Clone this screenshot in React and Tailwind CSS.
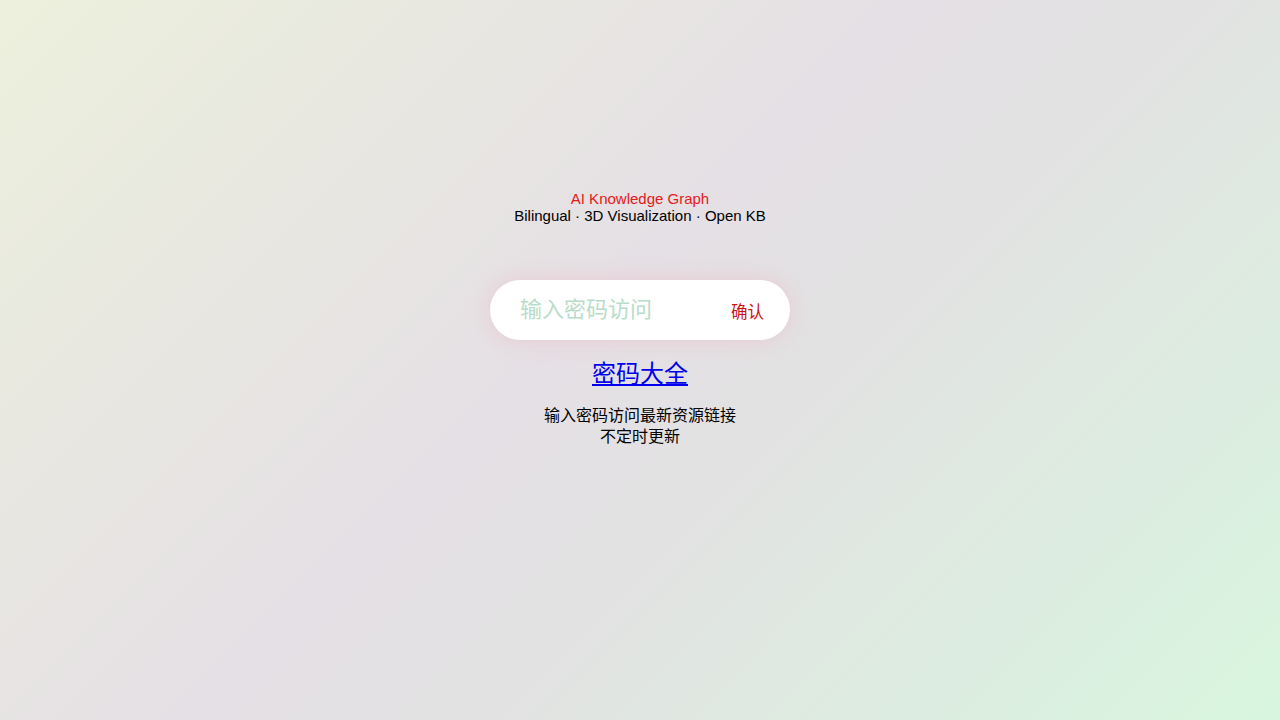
export default function App() {
  return (
    <div
      className="w-full h-[720px] overflow-hidden bg-[linear-gradient(135deg,#ecf0dc_0%,#e5e0e5_45%,#e2e2e2_60%,#d8f6df_100%)]"
      style={{ fontFamily: '"Liberation Sans", "Noto Sans CJK SC", sans-serif' }}
    >
      <div className="flex flex-col items-center pt-[190px]">
        <div className="text-center text-[15px] leading-[17px]">
          <div className="text-[#e31b1b]">AI Knowledge Graph</div>
          <div className="text-black">Bilingual · 3D Visualization · Open KB</div>
        </div>
        <div className="mt-[56px] w-[300px] h-[60px] rounded-full bg-white flex items-center pl-[30px] pr-[26px] shadow-[0_0_22px_rgba(240,170,185,0.4)]">
          <input
            type="password"
            placeholder="输入密码访问"
            className="flex-1 min-w-0 bg-transparent outline-none text-[22px] mb-[5px] placeholder:text-[#b9dcc8]"
            style={{ fontFamily: '"Noto Sans CJK SC", sans-serif' }}
          />
          <button
            className="text-[16.5px] text-[#cc1414] mt-[2px]"
            style={{ fontFamily: '"Noto Sans CJK SC", sans-serif' }}
          >
            确认
          </button>
        </div>
        <a
          href="#"
          className="mt-[18px] text-[24px] leading-[28px] text-[#0000ee] underline"
          style={{ fontFamily: '"Noto Sans CJK SC", sans-serif' }}
        >
          密码大全
        </a>
        <div
          className="mt-[17px] pt-[1px] text-center text-[16px] leading-[21px] text-black"
          style={{ fontFamily: '"Noto Sans CJK SC", sans-serif' }}
        >
          <div>输入密码访问最新资源链接</div>
          <div>不定时更新</div>
        </div>
      </div>
    </div>
  );
}
